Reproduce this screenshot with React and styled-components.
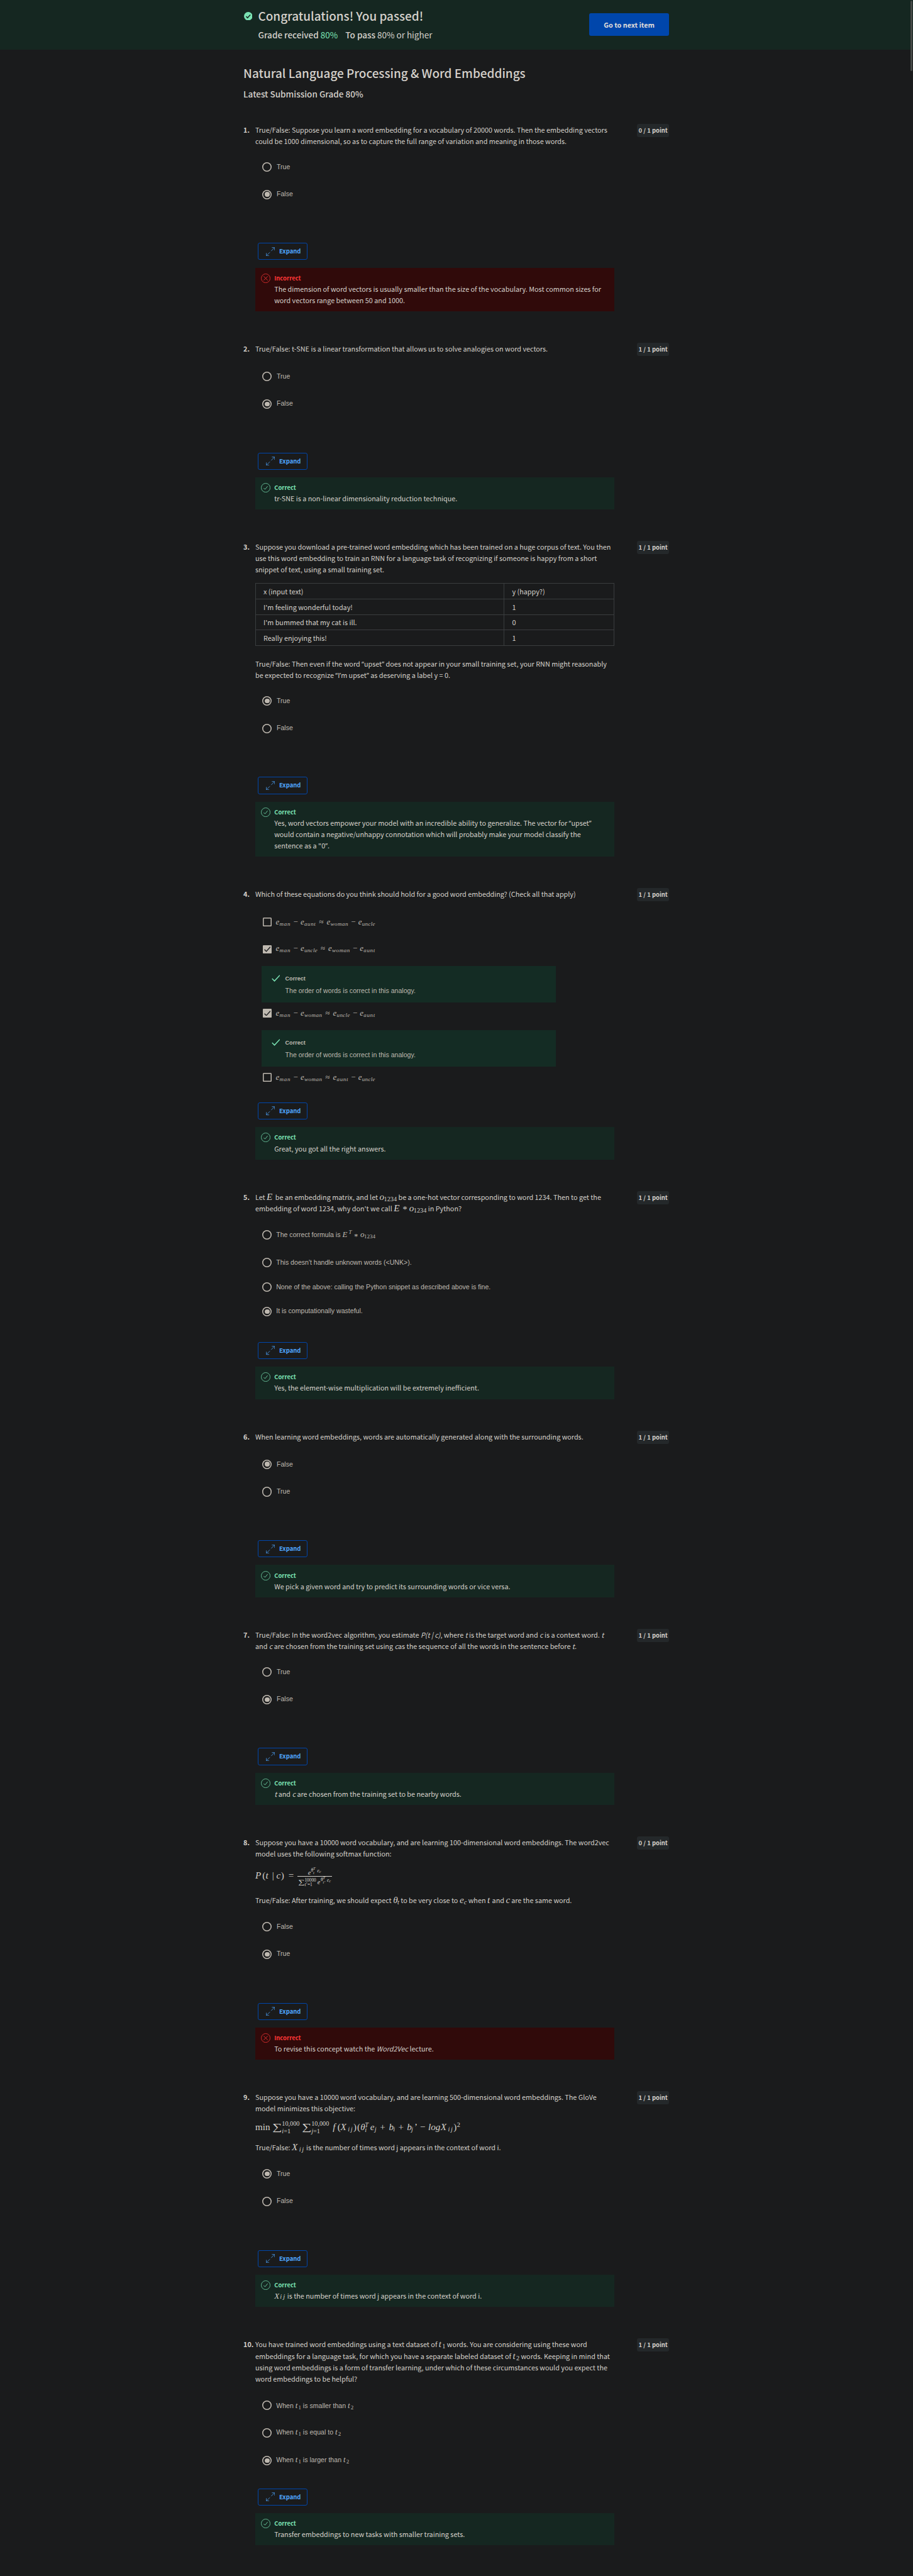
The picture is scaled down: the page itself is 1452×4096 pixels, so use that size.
import React from "react";
import styled, { createGlobalStyle, css } from "styled-components";

const sans = `"Noto Sans CJK SC", "Noto Sans", sans-serif`;
const arial = `"Liberation Sans", Arial, sans-serif`;
const serif = `"Liberation Serif", "Times New Roman", serif`;

const c = {
  page: "#1a1b1c",
  text: "#d5d1cb",
  muted: "#bfb9b0",
  band: "#152721",
  note: "#142c24",
  wrong: "#300a0a",
  green: "#7ae2b3",
  red: "#ff3636",
  blue: "#0046ab",
  link: "#4fa5fd",
  chip: "#24282a",
  line: "#3a3d3f",
};

const Global = createGlobalStyle`
  html, body { margin: 0; padding: 0; background: ${c.page}; }
  * { box-sizing: border-box; }
`;

const Page = styled.div`
  zoom: 0.756;
  display: grid;
  grid-template-rows: 104px auto;
  height: 5418px;
  overflow: hidden;
  position: relative;
  background: ${c.page};
  color: ${c.text};
  font-family: ${sans};
  font-size: 14.32px;
  line-height: 24px;
`;

const ScrollThumb = styled.div`
  position: absolute;
  right: 1.5px;
  top: 1px;
  width: 4px;
  height: 148px;
  border-radius: 2px;
  background: #454846;
`;

const Band = styled.header`
  background: ${c.band};
  display: flex;
  padding-left: 512px;
`;
const BandInner = styled.div`
  width: 896px;
  display: flex;
  align-items: flex-start;
  justify-content: space-between;
`;
const BandLeft = styled.div`
  display: grid;
  grid-template-columns: 31px auto;
  padding-top: 15px;
  svg { margin: 10px 0 0 1px; }
`;
const H1 = styled.h1`
  margin: 0;
  font-size: 25.06px;
  line-height: 36px;
  font-weight: 500;
  letter-spacing: -0.02px;
  white-space: nowrap;
`;
const Grades = styled.div`
  grid-column: 2;
  margin-top: 10px;
  display: flex;
  gap: 16px;
  font-size: 17.9px;
  line-height: 24px;
  white-space: nowrap;
  b { font-weight: 500; }
  em { font-style: normal; color: ${c.green}; }
`;
const NextButton = styled.button`
  margin-top: 28px;
  width: 169px;
  height: 48px;
  padding: 0;
  border: 0;
  border-radius: 4px;
  background: ${c.blue};
  color: #e2dfda;
  font: 700 14.32px/24px ${sans};
`;

const Main = styled.main`
  width: 896px;
  margin-left: 511px;
  padding-top: 31px;
  padding-left: 1px;
  box-sizing: content-box;
`;
const Latest = styled.div`
  margin: 14px 0 51px;
  font-size: 17.9px;
  line-height: 24px;
  font-weight: 500;
`;

const QuestionGrid = styled.section`
  display: grid;
  grid-template-columns: 25px 756px 1fr;
  margin-bottom: 66px;
  align-items: start;
`;
const Num = styled.div`
  font-weight: 700;
  white-space: nowrap;
`;
const Chip = styled.div`
  justify-self: end;
  width: 68px;
  height: 28px;
  border-radius: 4px;
  background: ${c.chip};
  font-weight: 700;
  font-size: 12.53px;
  line-height: 27px;
  text-align: center;
  white-space: nowrap;
`;
const Prompt = styled.div`
  min-height: 28px;
`;
const Line = styled.div`
  height: ${(p) => p.$h || 24}px;
  line-height: 24px;
  white-space: nowrap;
`;
const Quote = styled.span`
  font-family: "Noto Sans", sans-serif;
  font-size: 14px;
  line-height: 0;
`;
const Options = styled.div`
  padding-top: 14px;
  padding-bottom: ${(p) => p.$after ?? 73}px;
`;
const OptionRow = styled.label`
  display: flex;
  align-items: center;
  height: ${(p) => p.$h || 58}px;
  padding-left: 15px;
  gap: ${(p) => p.$gap ?? 9}px;
  font-family: ${arial};
  font-size: 14px;
  line-height: 16px;
  color: ${c.muted};
`;
const OptionText = styled.span`
  padding-bottom: ${(p) => p.$lift}px;
  white-space: nowrap;
`;
const Radio = styled.span`
  flex: none;
  width: 20px;
  height: 20px;
  border-radius: 50%;
  box-shadow: inset 0 0 0 2.1px ${c.muted};
  display: grid;
  place-items: center;
  ${(p) =>
    p.$on &&
    css`
      &::after {
        content: "";
        width: 10px;
        height: 10px;
        border-radius: 50%;
        background: ${c.muted};
      }
    `}
`;
const Check = styled.span`
  flex: none;
  width: 18px;
  height: 18px;
  margin-left: 1px;
  border-radius: 2px;
  box-shadow: inset 0 0 0 2px ${c.muted};
  background: ${(p) => (p.$on ? c.muted : "transparent")};
  display: grid;
  place-items: center;
`;
const ExpandButton = styled.button`
  display: flex;
  align-items: center;
  gap: 9px;
  width: 105px;
  height: 36px;
  margin: 0 0 16px 5px;
  padding: 0 0 0 16px;
  border: 1px solid ${c.blue};
  border-radius: 4px;
  background: transparent;
  color: ${c.link};
  font: 700 12.53px/20px ${sans};
`;
const Feedback = styled.div`
  display: grid;
  grid-template-columns: 28px auto;
  padding: 12px 0 12px 12px;
  background: ${(p) => (p.$bad ? c.wrong : c.band)};
`;
const Verdict = styled.div`
  font-weight: 700;
  font-size: 12.53px;
  line-height: 20px;
  color: ${(p) => (p.$bad ? c.red : c.green)};
`;
const Note = styled.div`
  display: grid;
  grid-template-columns: 29px auto;
  align-content: start;
  width: 620px;
  height: 77px;
  margin: ${(p) => p.$top}px 0 0 13px;
  padding: 18px 0 0 21px;
  background: ${c.note};
  color: ${c.muted};
  font: 14px/16px ${arial};
  b { font-size: 12px; }
  svg { margin-top: 1px; }
`;
const NoteBody = styled.div`
  grid-column: 2;
  margin-top: 9px;
`;

const Table = styled.table`
  width: 756px;
  margin: 16px 0 24px;
  border-collapse: collapse;
  table-layout: fixed;
  td {
    height: 33px;
    padding: 0 16px;
    border: 1px solid ${c.line};
  }
  td:first-child { width: 523px; }
`;

/* maths */
const M = styled.span`
  font-family: ${serif};
  font-style: italic;
  font-size: ${(p) => p.$s || 20}px;
  line-height: 0;
  white-space: nowrap;
`;
const G = styled.span`
  display: inline-block;
  width: ${(p) => p.$w}px;
  line-height: 0;
  font-style: ${(p) => (p.$up ? "normal" : "italic")};
  text-align: ${(p) => (p.$mid ? "center" : "left")};
`;
const Star = styled(G)`
  vertical-align: -3.5px;
`;
const Sigma = styled.span`
  display: inline-block;
  width: ${(p) => p.$w}px;
  line-height: 0;
  font-style: normal;
  transform: scaleX(1.4);
  transform-origin: left;
`;
const Sub = styled.span`
  font-size: ${(p) => p.$s || 13.6}px;
  line-height: 0;
  letter-spacing: ${(p) => p.$ls || 0}px;
  vertical-align: ${(p) => p.$v ?? -3}px;
  font-style: ${(p) => (p.$up ? "normal" : "italic")};
`;
const Scripts = styled.span`
  display: inline-flex;
  flex-direction: column;
  gap: ${(p) => p.$gap}px;
  width: ${(p) => p.$w}px;
  font-size: ${(p) => p.$s || 13.6}px;
  line-height: 0;
  vertical-align: ${(p) => p.$v}px;
  font-style: ${(p) => (p.$up ? "normal" : "italic")};
`;
const Formula = styled.div`
  height: ${(p) => p.$h}px;
  line-height: ${(p) => p.$lh}px;
  white-space: nowrap;
`;
const Fraction = styled.span`
  display: inline-flex;
  flex-direction: column;
  width: 72px;
  vertical-align: 8.3px;
  font-size: 13.6px;
`;
const FracTop = styled.span`
  padding-left: 21.5px;
  height: 17px;
  line-height: 18px;
  border-bottom: 1px solid ${c.text};
`;
const FracBottom = styled.span`
  height: 24px;
  line-height: 24.4px;
  padding-left: 1px;
`;

const BadgeIcon = () => (
  <svg width="18" height="18" viewBox="0 0 18 18">
    <circle cx="9" cy="9" r="9" fill={c.green} />
    <path d="M4.6 9.4l3 3 5.8-6.4" fill="none" stroke={c.band} strokeWidth="2" />
  </svg>
);
const OkIcon = () => (
  <svg width="20" height="20" viewBox="0 0 20 20" fill="none" stroke={c.green}>
    <circle cx="10" cy="10" r="9.3" />
    <path d="M5.8 10.6l2.8 2.8 5.4-6.6" strokeWidth="1.1" />
  </svg>
);
const BadIcon = () => (
  <svg width="20" height="20" viewBox="0 0 20 20" fill="none" stroke={c.red}>
    <circle cx="10" cy="10" r="9.3" />
    <path d="M5.8 5.8l8.4 8.4M14.2 5.8l-8.4 8.4" strokeWidth="1.1" />
  </svg>
);
const ExpandIcon = () => (
  <svg width="19" height="19" viewBox="0 0 19 19" fill="none" stroke={c.link} strokeWidth="1">
    <path d="M10.8 8.2L18 1M12.4 .9h5.8v5.8M8.2 10.8L1 18M.9 12.4v5.8h5.8" />
  </svg>
);
const Tick = ({ size, color, width }) => (
  <svg width={size} height={size * 0.8} viewBox="0 0 18 14.4" fill="none">
    <path d="M1 8l5 5L17.200 1" stroke={color} strokeWidth={width} />
  </svg>
);

const Eq = ({ terms }) => (
  <M $s={16.94}>
    {terms.map((t, i) => (
      <React.Fragment key={i}>
        {i > 0 && (
          <G $w={i === 2 ? 22.6 : 20.7} $mid $up>
            {i === 2 ? "≈" : "−"}
          </G>
        )}
        <G $w={7.9}>e</G>
        <Sub $s={12} $ls={{ man: 1, uncle: 0.4, woman: 0.65, aunt: 0.8 }[t]} $v={-2.5}>
          {t}
        </Sub>
      </React.Fragment>
    ))}
  </M>
);

const O1234 = ({ s = 19.4, k = 1 }) => (
  <>
    <G $w={9.3 * k}>o</G>
    <Sub $up $s={s * 0.7} $v={-3 * k}>
      1234
    </Sub>
  </>
);
const T = ({ n, s = 19.4, w = 7.2 }) => (
  <M $s={s}>
    <G $w={w}>t</G>
    <Sub $up $s={s * 0.7} $v={s * -0.15}>
      {n}
    </Sub>
  </M>
);
const Xij = () => (
  <>
    <G $w={15.5}>X</G>
    <Sub $ls={2}>ij</Sub>
  </>
);
const ThetaTE = ({ sub, gap }) => (
  <>
    <Sub $s={9.7} $v={6}>θ</Sub>
    <Scripts $w={8.5} $s={8.5} $gap={gap} $v={10.3}>
      <span>T</span>
      <span>{sub}</span>
    </Scripts>
    <Sub $s={9.7} $v={5}>e</Sub>
    <Sub $s={8.5} $v={3.8}>c</Sub>
  </>
);

const Option = ({ on, square, lift, h, gap, children }) => (
  <OptionRow $h={h} $gap={gap}>
    {square ? (
      <Check $on={on}>{on && <Tick size={14} color={c.page} width={2.4} />}</Check>
    ) : (
      <Radio $on={on} />
    )}
    <OptionText $lift={lift}>{children}</OptionText>
  </OptionRow>
);

const TrueFalse = ({ labels = ["True", "False"], chosen }) => (
  <Options>
    {labels.map((l, i) => (
      <Option key={l} on={i === chosen} lift={i ? 3 : 1} gap={10}>
        {l}
      </Option>
    ))}
  </Options>
);

const Question = ({ n, score = 1, prompt, options, children }) => {
  const bad = score === 0;
  return (
    <QuestionGrid>
      <Num>{n}.</Num>
      <div>
        <Prompt>{prompt}</Prompt>
        {options}
        <ExpandButton>
          <ExpandIcon />
          Expand
        </ExpandButton>
        <Feedback $bad={bad}>
          {bad ? <BadIcon /> : <OkIcon />}
          <div>
            <Verdict $bad={bad}>{bad ? "Incorrect" : "Correct"}</Verdict>
            {children}
          </div>
        </Feedback>
      </div>
      <Chip>{score} / 1 point</Chip>
    </QuestionGrid>
  );
};

const rows = [
  ["x (input text)", "y (happy?)"],
  ["I'm feeling wonderful today!", "1"],
  ["I'm bummed that my cat is ill.", "0"],
  ["Really enjoying this!", "1"],
];

const AnalogyNote = ({ top }) => (
  <Note $top={top}>
    <Tick size={18} color={c.green} width={2} />
    <b>Correct</b>
    <NoteBody>The order of words is correct in this analogy.</NoteBody>
  </Note>
);

export default function App() {
  return (
    <>
      <Global />
      <Page>
        <Band>
          <BandInner>
            <BandLeft>
              <BadgeIcon />
              <H1>Congratulations! You passed!</H1>
              <Grades>
                <span>
                  <b>Grade received</b> <em>80%</em>
                </span>
                <span>
                  <b>To pass</b> 80% or higher
                </span>
              </Grades>
            </BandLeft>
            <NextButton>Go to next item</NextButton>
          </BandInner>
        </Band>
        <Main>
          <H1 as="h2">Natural Language Processing &amp; Word Embeddings</H1>
          <Latest>Latest Submission Grade 80%</Latest>

          <Question
            n={1}
            score={0}
            prompt={
              <>
                <Line>True/False: Suppose you learn a word embedding for a vocabulary of 20000 words. Then the embedding vectors</Line>
                <Line>could be 1000 dimensional, so as to capture the full range of variation and meaning in those words.</Line>
              </>
            }
            options={<TrueFalse chosen={1} />}
          >
            <Line>The dimension of word vectors is usually smaller than the size of the vocabulary. Most common sizes for</Line>
            <Line>word vectors range between 50 and 1000.</Line>
          </Question>

          <Question
            n={2}
            prompt={<Line>True/False: t-SNE is a linear transformation that allows us to solve analogies on word vectors.</Line>}
            options={<TrueFalse chosen={1} />}
          >
            <Line>tr-SNE is a non-linear dimensionality reduction technique.</Line>
          </Question>

          <Question
            n={3}
            prompt={
              <>
                <Line>Suppose you download a pre-trained word embedding which has been trained on a huge corpus of text. You then</Line>
                <Line>use this word embedding to train an RNN for a language task of recognizing if someone is happy from a short</Line>
                <Line>snippet of text, using a small training set.</Line>
                <Table>
                  <tbody>
                    {rows.map(([x, y]) => (
                      <tr key={x}>
                        <td>{x}</td>
                        <td>{y}</td>
                      </tr>
                    ))}
                  </tbody>
                </Table>
                <Line>
                  True/False: Then even if the word <Quote>“</Quote>upset<Quote>”</Quote> does not appear in your small
                  training set, your RNN might reasonably
                </Line>
                <Line>
                  be expected to recognize <Quote>“</Quote>I<Quote>’</Quote>m upset<Quote>”</Quote> as deserving a label y = 0.
                </Line>
              </>
            }
            options={<TrueFalse chosen={0} />}
          >
            <Line>
              Yes, word vectors empower your model with an incredible ability to generalize. The vector for{" "}
              <Quote>“</Quote>upset<Quote>”</Quote>
            </Line>
            <Line>would contain a negative/unhappy connotation which will probably make your model classify the</Line>
            <Line>
              sentence as a "0<Quote>”</Quote>.
            </Line>
          </Question>

          <Question
            n={4}
            prompt={<Line>Which of these equations do you think should hold for a good word embedding? (Check all that apply)</Line>}
            options={
              <Options $after={31}>
                <Option square lift={0}>
                  <Eq terms={["man", "aunt", "woman", "uncle"]} />
                </Option>
                <Option square on lift={3}>
                  <Eq terms={["man", "uncle", "woman", "aunt"]} />
                </Option>
                <AnalogyNote top={6} />
                <Option square on h={44} lift={0}>
                  <Eq terms={["man", "woman", "uncle", "aunt"]} />
                </Option>
                <AnalogyNote top={14} />
                <Option square h={44} lift={0}>
                  <Eq terms={["man", "woman", "aunt", "uncle"]} />
                </Option>
              </Options>
            }
          >
            <Line>Great, you got all the right answers.</Line>
          </Question>

          <Question
            n={5}
            prompt={
              <>
                <Line>
                  Let <M><G $w={15}>E</G></M> be an embedding matrix, and let <M><O1234 /></M> be a one-hot vector
                  corresponding to word 1234. Then to get the
                </Line>
                <Line $h={25}>
                  embedding of word 1234, why don't we call <M><G $w={14.6}>E</G><Star $w={18} $mid $up>*</Star><O1234 /></M> in Python?
                </Line>
              </>
            }
            options={
              <Options $after={33}>
                <Option lift={0}>
                  The correct formula is{" "}
                  <M $s={17.2}>
                    <G $w={13.2}>E</G>
                    <Sub $s={11.9} $v={7}>T</Sub>
                    <Star $w={18} $mid $up>*</Star>
                    <O1234 s={16.94} k={0.87} />
                  </M>
                </Option>
                <Option h={60} lift={3}>This doesn't handle unknown words (&lt;UNK&gt;).</Option>
                <Option h={42} lift={1}>None of the above: calling the Python snippet as described above is fine.</Option>
                <Option h={62} on lift={3}>It is computationally wasteful.</Option>
              </Options>
            }
          >
            <Line>Yes, the element-wise multiplication will be extremely inefficient.</Line>
          </Question>

          <Question
            n={6}
            prompt={<Line>When learning word embeddings, words are automatically generated along with the surrounding words.</Line>}
            options={<TrueFalse labels={["False", "True"]} chosen={0} />}
          >
            <Line>We pick a given word and try to predict its surrounding words or vice versa.</Line>
          </Question>

          <Question
            n={7}
            prompt={
              <>
                <Line>
                  True/False: In the word2vec algorithm, you estimate <i>P(t | c)</i>, where <i>t</i> is the target word and{" "}
                  <i>c</i> is a context word. <i>t</i>
                </Line>
                <Line>
                  and <i>c</i> are chosen from the training set using <i>c</i>as the sequence of all the words in the sentence
                  before <i>t</i>.
                </Line>
              </>
            }
            options={<TrueFalse chosen={1} />}
          >
            <Line>
              <i>t</i> and <i>c</i> are chosen from the training set to be nearby words.
            </Line>
          </Question>

          <Question
            n={8}
            score={0}
            prompt={
              <>
                <Line>Suppose you have a 10000 word vocabulary, and are learning 100-dimensional word embeddings. The word2vec</Line>
                <Line>model uses the following softmax function:</Line>
                <Formula $h={73} $lh={69.6}>
                  <M>
                    <G $w={15}>P</G>
                    <G $w={7} $up>(</G>
                    <G $w={9}>t</G>
                    <G $w={13} $mid $up>|</G>
                    <G $w={10} $mid>c</G>
                    <G $w={8} $up>)</G>
                    <G $w={27.4} $mid $up>=</G>
                    <Fraction>
                      <FracTop>
                        <G $w={6.3}>e</G>
                        <ThetaTE sub="t" gap={8.4} />
                      </FracTop>
                      <FracBottom>
                        <Sigma $w={13.5}>∑</Sigma>
                        <Scripts $up $w={27} $s={9.7} $gap={9.7} $v={5}>
                          <span>10000</span>
                          <span><i>t</i>’=1</span>
                        </Scripts>
                        <G $w={6.8}>e</G>
                        <ThetaTE sub="t’" gap={9} />
                      </FracBottom>
                    </Fraction>
                  </M>
                </Formula>
                <Line $h={26}>
                  True/False: After training, we should expect{" "}
                  <M><G $w={9}>θ</G><Sub $v={-3}>t</Sub></M> to be very close to{" "}
                  <M><G $w={9}>e</G><Sub $v={-3}>c</Sub></M> when <M><G $w={7}>t</G></M> and <M><G $w={8.4}>c</G></M> are the same word.
                </Line>
              </>
            }
            options={<TrueFalse labels={["False", "True"]} chosen={1} />}
          >
            <Line>
              To revise this concept watch the <i>Word2Vec</i> lecture.
            </Line>
          </Question>

          <Question
            n={9}
            prompt={
              <>
                <Line>Suppose you have a 10000 word vocabulary, and are learning 500-dimensional word embeddings. The GloVe</Line>
                <Line>model minimizes this objective:</Line>
                <Formula $h={58} $lh={56.2}>
                  <M>
                    <G $w={36} $up>min</G>
                    <Sigma $w={20}>∑</Sigma>
                    <Scripts $up $w={42} $gap={16} $v={10.3}>
                      <span>10,000</span>
                      <span><i>i</i>=1</span>
                    </Scripts>
                    <Sigma $w={20}>∑</Sigma>
                    <Scripts $up $w={45} $gap={16} $v={10.3}>
                      <span>10,000</span>
                      <span><i>j</i>=1</span>
                    </Scripts>
                    <G $w={10}>f</G>
                    <G $w={6.5} $up>(</G>
                    <Xij />
                    <G $w={8} $up>)</G>
                    <G $w={7} $up>(</G>
                    <G $w={9}>θ</G>
                    <Scripts $w={11.5} $gap={10.3} $v={7.3}>
                      <span>T</span>
                      <span>i</span>
                    </Scripts>
                    <G $w={9}>e</G>
                    <Sub>j</Sub>
                    <G $w={26.5} $mid $up>+</G>
                    <G $w={8.8}>b</G>
                    <Sub>i</Sub>
                    <G $w={25.5} $mid $up>+</G>
                    <G $w={8.8}>b</G>
                    <Sub $ls={3}>j</Sub>
                    <G $w={6} $up>’</G>
                    <G $w={23} $mid $up>−</G>
                    <G $w={26.3}>log</G>
                    <Xij />
                    <G $w={7.2} $up>)</G>
                    <Sub $up $v={7}>2</Sub>
                  </M>
                </Formula>
                <Line $h={25}>
                  True/False: <M><Xij /></M> is the number of times word j appears in the context of word i.
                </Line>
              </>
            }
            options={<TrueFalse chosen={0} />}
          >
            <Line>
              <M $s={17}><G $w={12}>X</G></M>
              <M $s={14}><G $w={5}>i</G><G $w={7} $mid>j</G></M>{" "}
              is the number of times word j appears in the context of word i.
            </Line>
          </Question>

          <Question
            n={10}
            prompt={
              <>
                <Line $h={25}>
                  You have trained word embeddings using a text dataset of <T n={1} /> words. You are considering using these word
                </Line>
                <Line $h={24}>
                  embeddings for a language task, for which you have a separate labeled dataset of <T n={2} /> words. Keeping in mind that
                </Line>
                <Line>using word embeddings is a form of transfer learning, under which of these circumstances would you expect the</Line>
                <Line $h={25}>word embeddings to be helpful?</Line>
              </>
            }
            options={
              <Options $after={29.5}>
                <Option lift={0}>When <T n={1} s={16.94} w={6.2} /> is smaller than <T n={2} s={16.94} w={6.2} /></Option>
                <Option lift={3}>When <T n={1} s={16.94} w={6.2} /> is equal to <T n={2} s={16.94} w={6.2} /></Option>
                <Option on lift={3}>When <T n={1} s={16.94} w={6.2} /> is larger than <T n={2} s={16.94} w={6.2} /></Option>
              </Options>
            }
          >
            <Line>Transfer embeddings to new tasks with smaller training sets.</Line>
          </Question>
        </Main>
        <ScrollThumb />
      </Page>
    </>
  );
}
